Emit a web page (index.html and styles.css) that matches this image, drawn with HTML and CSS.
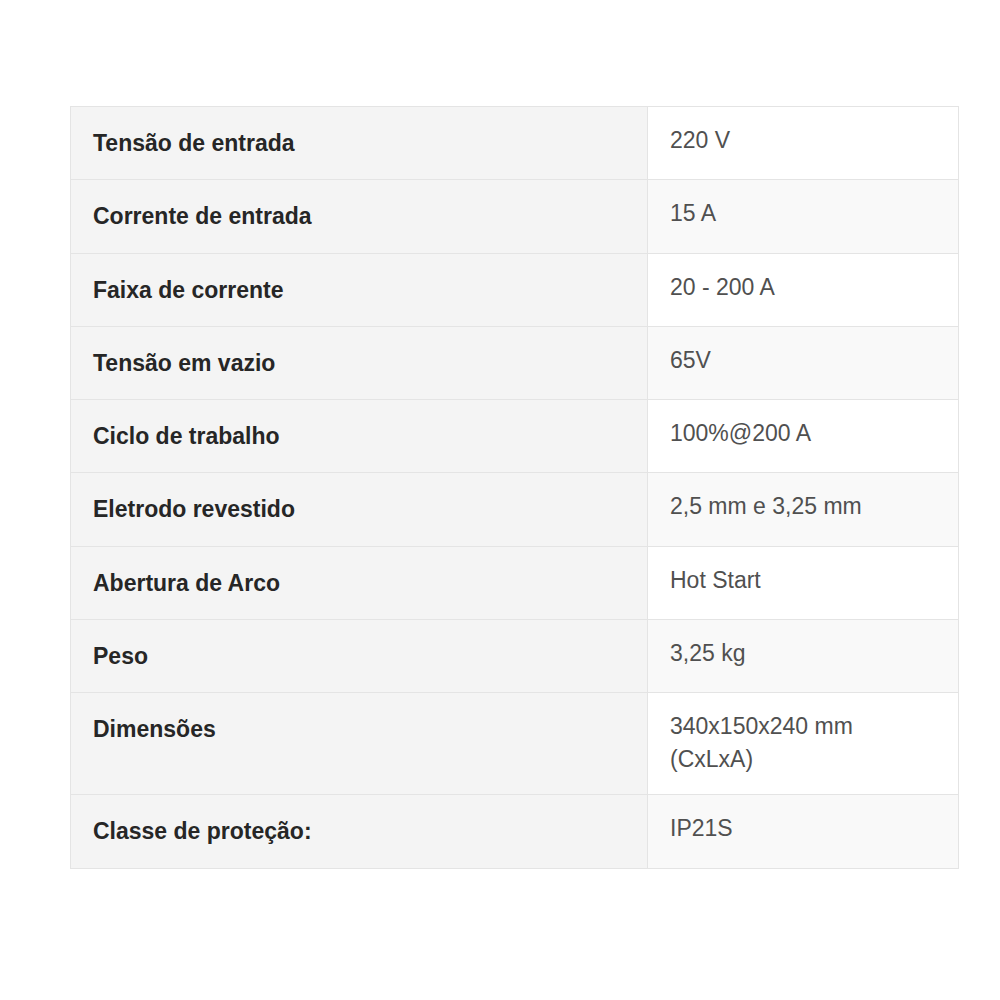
FILE: index.html
```html
<!DOCTYPE html>
<html lang="pt">
<head>
<meta charset="utf-8">
<title>Especificações</title>
<link rel="stylesheet" href="styles.css">
</head>
<body>
<table class="specs">
  <tbody>
    <tr><th>Tensão de entrada</th><td>220 V</td></tr>
    <tr><th>Corrente de entrada</th><td>15 A</td></tr>
    <tr><th>Faixa de corrente</th><td>20 - 200 A</td></tr>
    <tr><th>Tensão em vazio</th><td>65V</td></tr>
    <tr><th>Ciclo de trabalho</th><td>100%@200 A</td></tr>
    <tr><th>Eletrodo revestido</th><td>2,5 mm e 3,25 mm</td></tr>
    <tr><th>Abertura de Arco</th><td>Hot Start</td></tr>
    <tr><th>Peso</th><td>3,25 kg</td></tr>
    <tr><th>Dimensões</th><td>340x150x240 mm<br>(CxLxA)</td></tr>
    <tr><th>Classe de proteção:</th><td>IP21S</td></tr>
  </tbody>
</table>
</body>
</html>
```

FILE: styles.css
```css
html, body {
  margin: 0;
  padding: 0;
  background: #ffffff;
}

body {
  padding: 106px 0 0 70px;
  font-family: "Liberation Sans", Arial, sans-serif;
  font-size: 23px;
}

.specs {
  width: 889px;
  border-collapse: collapse;
  border: 1px solid #e4e4e4;
}

.specs th,
.specs td {
  border: 1px solid #e4e4e4;
  vertical-align: top;
  text-align: left;
  line-height: 33px;
}

.specs th {
  width: 532px;
  background: #f4f4f4;
  color: #262626;
  font-weight: bold;
  padding: 20px 22px 19.3px 22px;
}

.specs td {
  background: #ffffff;
  color: #505050;
  font-weight: normal;
  padding: 17px 22px 18px 22px;
}

.specs tr:nth-child(even) td {
  background: #f9f9f9;
}
```
